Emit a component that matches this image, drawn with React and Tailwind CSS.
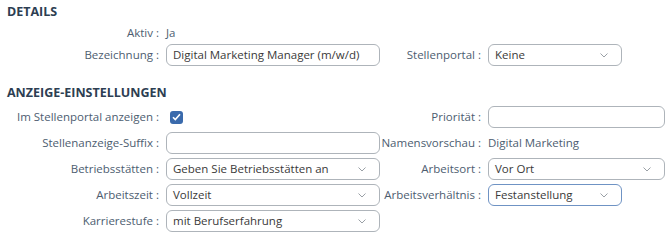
import React from "react";

const font = { fontFamily: '"Open Sans", "Noto Sans", sans-serif' };

function Label({ children }) {
  return (
    <div className="flex h-[22px] items-center justify-end whitespace-nowrap text-[11.5px] text-[#4d5d70]">
      {children}&nbsp;:
    </div>
  );
}

function TextInput({ value = "", wide }) {
  return (
    <div
      className={`flex h-[22px] items-center rounded-[6px] border border-[#aeb4ba] bg-white px-[6px] text-[11.5px] text-[#3a3a3a] ${
        wide ? "w-[177px]" : "w-[214px]"
      }`}
    >
      {value}
    </div>
  );
}

function Chevron() {
  return (
    <svg width="8" height="5" viewBox="0 0 8 5" className="shrink-0">
      <path d="M0.5 0.5l3.5 3.5L7.5 0.5" fill="none" stroke="#9aa0a6" strokeWidth="1" />
    </svg>
  );
}

function Select({ value, width = "w-[214px]", focused }) {
  return (
    <div
      className={`flex h-[22px] items-center justify-between rounded-[6px] border bg-white pl-[6px] pr-[13px] text-[11.5px] text-[#3a3a3a] ${width} ${
        focused ? "border-[#6f93c4]" : "border-[#aeb4ba]"
      }`}
    >
      <span>{value}</span>
      <Chevron />
    </div>
  );
}

function Checkbox() {
  return (
    <div className="flex h-[22px] items-center">
      <div className="ml-[4px] flex h-[13px] w-[13px] items-center justify-center rounded-[3px] bg-[#3a6aac]">
        <svg width="9" height="8" viewBox="0 0 9 8">
          <path d="M1 4.2l2.3 2.3L8 1.2" fill="none" stroke="white" strokeWidth="1.6" />
        </svg>
      </div>
    </div>
  );
}

function Value({ children }) {
  return (
    <div className="flex h-[22px] items-center text-[11.5px] text-[#4d5d70]">{children}</div>
  );
}

export default function App() {
  return (
    <div className="h-[237px] w-[670px] bg-white px-[7px] pt-[3px]" style={font}>
      <h2 className="h-[18px] text-[12.5px] font-bold leading-[18px] text-[#2d3e52]">DETAILS</h2>
      <div className="mt-[1px] grid grid-cols-[152px_214px_94px_auto] gap-x-[7px] gap-y-[0px]">
        <Label>Aktiv</Label>
        <div className="col-span-3 flex h-[22px] items-center text-[11.5px] text-[#4d5d70]">Ja</div>
        <Label>Bezeichnung</Label>
        <TextInput value="Digital Marketing Manager (m/w/d)" />
        <Label>Stellenportal</Label>
        <Select value="Keine" width="w-[134px]" />
      </div>

      <h2 className="mt-[18px] h-[18px] text-[12.5px] font-bold leading-[18px] text-[#2d3e52]">
        ANZEIGE-EINSTELLUNGEN
      </h2>
      <div className="mt-[4px] grid grid-cols-[152px_214px_94px_auto] gap-x-[7px] gap-y-[4px]">
        <Label>Im Stellenportal anzeigen</Label>
        <Checkbox />
        <Label>Priorität</Label>
        <TextInput wide />

        <Label>Stellenanzeige-Suffix</Label>
        <TextInput />
        <Label>Namensvorschau</Label>
        <Value>Digital Marketing</Value>

        <Label>Betriebsstätten</Label>
        <Select value="Geben Sie Betriebsstätten an" />
        <Label>Arbeitsort</Label>
        <Select value="Vor Ort" width="w-[177px]" />

        <Label>Arbeitszeit</Label>
        <Select value="Vollzeit" />
        <Label>Arbeitsverhältnis</Label>
        <Select value="Festanstellung" width="w-[134px]" focused />

        <Label>Karrierestufe</Label>
        <Select value="mit Berufserfahrung" />
      </div>
    </div>
  );
}
